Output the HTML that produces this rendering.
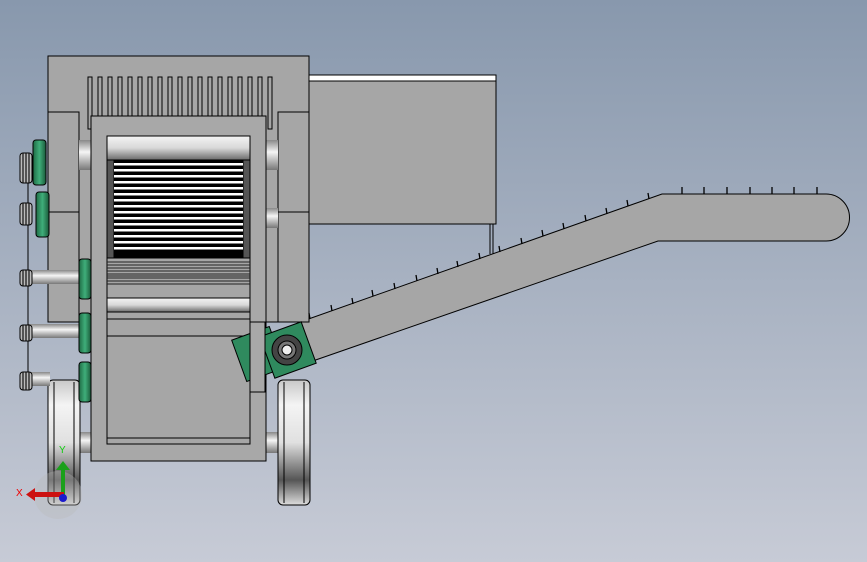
<!DOCTYPE html>
<html><head><meta charset="utf-8"><style>
html,body{margin:0;padding:0;width:867px;height:562px;overflow:hidden}
body{background:linear-gradient(#8898ad,#c7cbd6)}
svg{position:absolute;left:0;top:0}
text{font-family:"Liberation Sans",sans-serif}
</style></head><body>
<svg width="867" height="562" viewBox="0 0 867 562" xmlns="http://www.w3.org/2000/svg">
<defs>
<linearGradient id="rollV" x1="0" y1="0" x2="0" y2="1"><stop offset="0" stop-color="#f4f4f4"/><stop offset=".5" stop-color="#d8d8d8"/><stop offset="1" stop-color="#6a6a6a"/></linearGradient>
<linearGradient id="wheel" x1="0" y1="0" x2="0" y2="1"><stop offset="0" stop-color="#c8c8c8"/><stop offset=".2" stop-color="#f4f4f4"/><stop offset=".5" stop-color="#e0e0e0"/><stop offset=".8" stop-color="#555"/><stop offset="1" stop-color="#ddd"/></linearGradient>
<linearGradient id="grn" x1="0" y1="0" x2="1" y2="0"><stop offset="0" stop-color="#1f6b45"/><stop offset=".5" stop-color="#3fae7a"/><stop offset="1" stop-color="#1a5a3a"/></linearGradient>
<linearGradient id="shaft" x1="0" y1="0" x2="0" y2="1"><stop offset="0" stop-color="#888"/><stop offset=".4" stop-color="#f5f5f5"/><stop offset="1" stop-color="#777"/></linearGradient>
</defs>
<g stroke="#000" stroke-width="1">
<!-- hopper -->
<rect x="309" y="75" width="187" height="149" fill="#a6a6a6"/>
<rect x="309" y="75" width="187" height="6" fill="#fff"/>
<line x1="490" y1="224" x2="490" y2="254"/><line x1="493" y1="224" x2="493" y2="254"/>
<!-- conveyor -->
<path d="M300 322 L662 194 L826 194 A23.5 23.5 0 0 1 826 241 L658 241 L307 363 L300 366 Z" fill="#a6a6a6"/>
<!-- back box -->
<rect x="48" y="56" width="261" height="266" fill="#a6a6a6"/>
<rect x="48" y="112" width="31" height="210" fill="#a6a6a6"/>
<rect x="278" y="112" width="31" height="210" fill="#a6a6a6"/>
<line x1="48" y1="212" x2="79" y2="212"/><line x1="278" y1="212" x2="309" y2="212"/>
<!-- shafts behind -->
<rect x="79" y="140" width="12" height="30" fill="url(#shaft)" stroke="none"/>
<rect x="266" y="140" width="12" height="30" fill="url(#shaft)" stroke="none"/>
<rect x="266" y="208" width="12" height="20" fill="url(#shaft)" stroke="none"/>
<!-- axle -->
<rect x="80" y="432" width="198" height="21" fill="url(#shaft)" stroke="none"/>
<!-- wheels -->
<rect x="48" y="380" width="32" height="125" rx="5" fill="url(#wheel)"/>
<line x1="54" y1="382" x2="54" y2="503"/><line x1="74" y1="382" x2="74" y2="503"/>
<rect x="278" y="380" width="32" height="125" rx="5" fill="url(#wheel)"/>
<line x1="284" y1="382" x2="284" y2="503"/><line x1="304" y1="382" x2="304" y2="503"/>
<!-- left shafts + pulleys -->
<rect x="28" y="270" width="52" height="14" fill="url(#shaft)" stroke="none"/>
<rect x="28" y="324" width="52" height="14" fill="url(#shaft)" stroke="none"/>
<rect x="28" y="372" width="22" height="14" fill="url(#shaft)" stroke="none"/>
<line x1="28" y1="155" x2="28" y2="390"/>
<g fill="#bbb">
<rect x="20" y="153" width="12" height="30" rx="3"/><rect x="20" y="203" width="12" height="22" rx="3"/>
<rect x="20" y="270" width="12" height="16" rx="3"/><rect x="20" y="325" width="12" height="16" rx="3"/><rect x="20" y="372" width="12" height="18" rx="3"/>
</g>
<g stroke="#111" stroke-width="1.2">
<line x1="23" y1="153" x2="23" y2="183"/><line x1="26" y1="153" x2="26" y2="183"/><line x1="29" y1="153" x2="29" y2="183"/>
<line x1="23" y1="203" x2="23" y2="225"/><line x1="26" y1="203" x2="26" y2="225"/><line x1="29" y1="203" x2="29" y2="225"/>
<line x1="23" y1="270" x2="23" y2="286"/><line x1="26" y1="270" x2="26" y2="286"/><line x1="29" y1="270" x2="29" y2="286"/>
<line x1="23" y1="325" x2="23" y2="341"/><line x1="26" y1="325" x2="26" y2="341"/><line x1="29" y1="325" x2="29" y2="341"/>
<line x1="23" y1="372" x2="23" y2="390"/><line x1="26" y1="372" x2="26" y2="390"/><line x1="29" y1="372" x2="29" y2="390"/>
</g>
<g fill="url(#grn)">
<rect x="33" y="140" width="13" height="45" rx="3"/><rect x="36" y="192" width="13" height="45" rx="3"/>
<rect x="79" y="259" width="12" height="40" rx="3"/><rect x="79" y="313" width="12" height="40" rx="3"/><rect x="79" y="362" width="12" height="40" rx="3"/>
</g>
<!-- comb -->
<g fill="#a6a6a6">
<rect x="88" y="77" width="4" height="52"/><rect x="98" y="77" width="4" height="52"/><rect x="108" y="77" width="4" height="52"/><rect x="118" y="77" width="4" height="52"/><rect x="128" y="77" width="4" height="52"/><rect x="138" y="77" width="4" height="52"/><rect x="148" y="77" width="4" height="52"/><rect x="158" y="77" width="4" height="52"/><rect x="168" y="77" width="4" height="52"/><rect x="178" y="77" width="4" height="52"/><rect x="188" y="77" width="4" height="52"/><rect x="198" y="77" width="4" height="52"/><rect x="208" y="77" width="4" height="52"/><rect x="218" y="77" width="4" height="52"/><rect x="228" y="77" width="4" height="52"/><rect x="238" y="77" width="4" height="52"/><rect x="248" y="77" width="4" height="52"/><rect x="258" y="77" width="4" height="52"/><rect x="268" y="77" width="4" height="52"/>
</g>
<!-- front frame -->
<rect x="91" y="116" width="175" height="345" fill="#a8a8a8"/>
<rect x="107" y="136" width="143" height="308" fill="#a6a6a6"/>
<rect x="107" y="136" width="143" height="24" fill="url(#rollV)"/>
<rect x="107" y="160" width="143" height="98" fill="#555"/>
<rect x="114" y="161" width="129" height="96" fill="#000"/>
<rect x="107" y="298" width="143" height="14" fill="url(#rollV)"/>
<line x1="107" y1="319" x2="250" y2="319"/><line x1="107" y1="336" x2="250" y2="336"/>
<line x1="107" y1="438" x2="250" y2="438"/>
</g>
<!-- grill stripes -->
<g fill="#fff">
<rect x="114" y="163" width="129" height="2.5"/><rect x="114" y="169" width="129" height="2.5"/><rect x="114" y="175" width="129" height="2.5"/><rect x="114" y="181" width="129" height="2.5"/><rect x="114" y="187" width="129" height="2.5"/><rect x="114" y="193" width="129" height="2.5"/><rect x="114" y="199" width="129" height="2.5"/><rect x="114" y="205" width="129" height="2.5"/><rect x="114" y="211" width="129" height="2.5"/><rect x="114" y="217" width="129" height="2.5"/><rect x="114" y="223" width="129" height="2.5"/><rect x="114" y="229" width="129" height="2.5"/><rect x="114" y="235" width="129" height="2.5"/><rect x="114" y="241" width="129" height="2.5"/><rect x="114" y="247" width="129" height="2.5"/>
</g>
<g stroke="#222" stroke-width="1">
<line x1="107" y1="262" x2="250" y2="262"/><line x1="107" y1="265" x2="250" y2="265"/><line x1="107" y1="268" x2="250" y2="268"/><line x1="107" y1="271" x2="250" y2="271"/><line x1="107" y1="274" x2="250" y2="274"/><line x1="107" y1="276" x2="250" y2="276"/><line x1="107" y1="278" x2="250" y2="278"/><line x1="107" y1="281" x2="250" y2="281"/><line x1="107" y1="284" x2="250" y2="284"/>
</g>
<!-- bearing -->
<g stroke="#000" stroke-width="1">
<rect x="238" y="332" width="40" height="44" fill="#2f8a5e" transform="rotate(-20 258 354)"/>
<rect x="266" y="328" width="44" height="44" fill="#2f8a5e" transform="rotate(-20 288 350)"/>
<circle cx="287" cy="350" r="15" fill="#444"/><circle cx="287" cy="350" r="9" fill="#777"/><circle cx="287" cy="350" r="5" fill="#eee"/>
<rect x="250" y="322" width="15" height="70" fill="#a8a8a8"/>
</g>
<!-- teeth -->
<g stroke="#000" stroke-width="1.3">
<line x1="309" y1="313" x2="310" y2="319"/><line x1="331" y1="305" x2="332" y2="311"/><line x1="352" y1="298" x2="353" y2="304"/><line x1="372" y1="290" x2="373" y2="296"/><line x1="394" y1="283" x2="395" y2="289"/><line x1="416" y1="275" x2="417" y2="281"/><line x1="437" y1="268" x2="438" y2="274"/><line x1="457" y1="261" x2="458" y2="267"/><line x1="479" y1="253" x2="480" y2="259"/><line x1="499" y1="246" x2="500" y2="252"/><line x1="521" y1="238" x2="522" y2="244"/><line x1="542" y1="230" x2="543" y2="236"/><line x1="563" y1="223" x2="564" y2="229"/><line x1="585" y1="215" x2="586" y2="221"/><line x1="606" y1="208" x2="607" y2="214"/><line x1="627" y1="200" x2="628" y2="206"/><line x1="648" y1="193" x2="649" y2="199"/>
<line x1="682" y1="187" x2="682" y2="194"/><line x1="704" y1="187" x2="704" y2="194"/><line x1="727" y1="187" x2="727" y2="194"/><line x1="750" y1="187" x2="750" y2="194"/><line x1="772" y1="187" x2="772" y2="194"/><line x1="794" y1="187" x2="794" y2="194"/><line x1="817" y1="187" x2="817" y2="194"/>
</g>
<!-- triad -->
<circle cx="58" cy="495" r="24" fill="#bbb" opacity=".35"/>
<rect x="61" y="468" width="4" height="27" fill="#1aa01a"/><polygon points="56,470 63,461 70,470" fill="#1aa01a"/>
<rect x="34" y="492" width="30" height="5" fill="#cc1111"/><polygon points="35,488 26,494.5 35,501" fill="#cc1111"/>
<circle cx="63" cy="498" r="4" fill="#1a1acc"/>
<text x="59" y="453" font-size="10" fill="#1c1">Y</text>
<text x="16" y="496" font-size="10" fill="#e00">X</text>
</svg>
</body></html>
